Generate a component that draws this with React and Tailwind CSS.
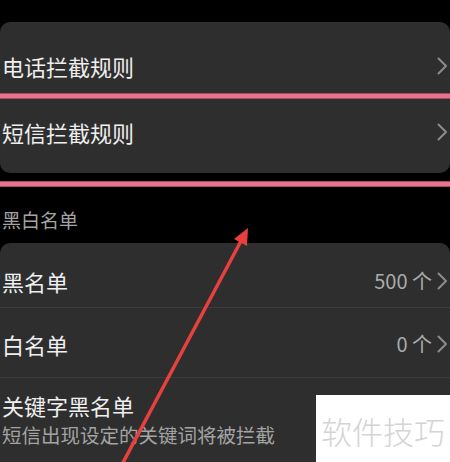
import React from "react";

const Chevron = ({ className = "" }) => (
  <svg width="11" height="18" viewBox="0 0 11 18" className={className}>
    <polyline points="1.5,1.5 9,9 1.5,16.5" fill="none" stroke="#8c8c8c" strokeWidth="2" strokeLinecap="round" strokeLinejoin="round" />
  </svg>
);

const PinkLine = () => (
  <div className="h-[6px] w-full bg-[#e9728f] border-y border-[#a84a62]" />
);

const App = () => {
  return (
    <div
      className="relative w-[450px] h-[462px] overflow-hidden bg-black text-[#efefef]"
      style={{ fontFamily: '"Noto Sans CJK SC", "Noto Sans", sans-serif' }}
    >
      <div className="pt-[22px]">
        {/* 拦截规则 */}
        <div className="bg-[#2e2e2e] rounded-[10px] h-[151px] overflow-hidden">
          <div className="h-[71px] pt-[16px] flex items-center justify-between pl-[2px] pr-[2px]">
            <span className="text-[22px] leading-none">电话拦截规则</span>
            <Chevron />
          </div>
          <PinkLine />
          <div className="h-[74px] pb-[8px] flex items-center justify-between pl-[2px] pr-[2px]">
            <span className="text-[22px] leading-none">短信拦截规则</span>
            <Chevron />
          </div>
        </div>
        <div className="mt-[8px]">
          <PinkLine />
        </div>

        {/* 黑白名单 */}
        <div className="h-[56px] pt-[8px] flex items-center pl-[2px]">
          <span className="text-[19px] leading-none text-[#a3a3a3]">黑白名单</span>
        </div>
        <div className="bg-[#2e2e2e] rounded-t-[10px] h-[260px]">
          <div className="h-[65px] pt-[11px] flex items-center justify-between pl-[2px] pr-[2px] border-b border-[#3c3c3c]">
            <span className="text-[22px] leading-none">黑名单</span>
            <div className="flex items-center gap-[5px] text-[20px] leading-none text-[#ababab]">
              <span>500 个</span>
              <Chevron />
            </div>
          </div>
          <div className="h-[70px] pt-[3px] flex items-center justify-between pl-[2px] pr-[2px] border-b border-[#3c3c3c]">
            <span className="text-[22px] leading-none">白名单</span>
            <div className="flex items-center gap-[5px] text-[20px] leading-none text-[#ababab]">
              <span>0 个</span>
              <Chevron />
            </div>
          </div>
          <div className="pt-[16px] pl-[2px] flex flex-col gap-[9px]">
            <span className="text-[22px] leading-none">关键字黑名单</span>
            <span className="text-[19.5px] leading-none text-[#a3a3a3]">短信出现设定的关键词将被拦截</span>
          </div>
        </div>
      </div>

      {/* annotation arrow */}
      <svg className="absolute inset-0 pointer-events-none" width="450" height="462" viewBox="0 0 450 462">
        <line x1="118" y1="472" x2="241" y2="241" stroke="#e8403f" strokeWidth="3.5" />
        <polygon points="248,228 247,246 234,239" fill="#e8403f" />
      </svg>

      {/* watermark */}
      <div className="absolute left-[316px] top-[395px] right-0 bottom-0 bg-white flex items-center pl-[5px] pt-[3px]">
        <span className="text-[31px] leading-none font-light text-[#d4d4d4]">软件技巧</span>
      </div>
    </div>
  );
};

export default App;
